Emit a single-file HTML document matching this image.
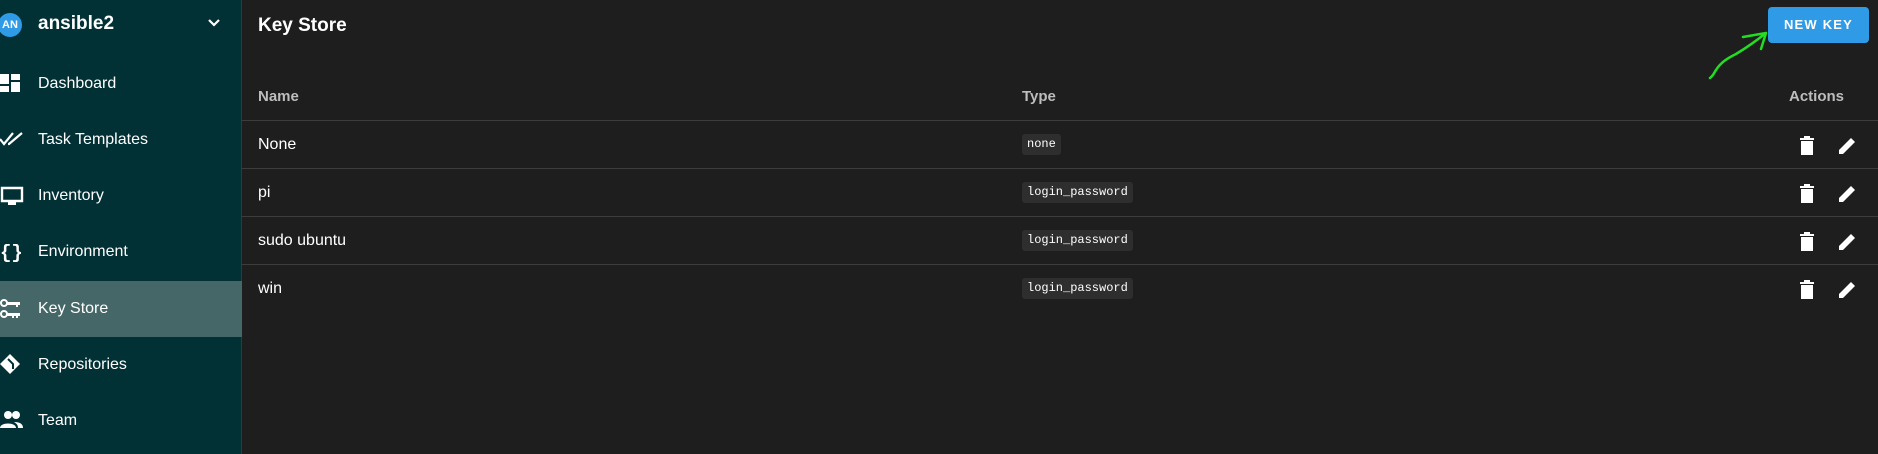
<!DOCTYPE html>
<html><head><meta charset="utf-8"><style>
*{margin:0;padding:0;box-sizing:border-box}
body{width:1878px;height:454px;background:#1e1e1e;font-family:"Liberation Sans",sans-serif;color:#fff;position:relative;overflow:hidden}
.side{position:absolute;left:0;top:0;width:242px;height:454px;background:#013035;border-right:1px solid #2a3b3d}
.av{position:absolute;left:-2px;top:13px;width:24px;height:24px;border-radius:50%;background:#2f9be6;font-size:11px;font-weight:bold;line-height:24px;text-align:center}
.proj{position:absolute;left:38px;top:13px;font-size:19px;font-weight:bold}
.chev{position:absolute;left:207px;top:18px}
.item{position:absolute;left:0;width:242px;height:56px}
.item span{position:absolute;left:38px;top:19px;font-size:16px}
.item svg{position:absolute;left:0;top:17px}
.sel{background:#466767}
.title{position:absolute;left:258px;top:15px;font-size:19px;font-weight:bold}
.btn{position:absolute;left:1768px;top:7px;width:101px;height:36px;background:#2f9be6;border-radius:4px;font-size:13px;font-weight:bold;letter-spacing:1.2px;text-align:center;line-height:36px}
.th{position:absolute;top:88px;font-size:15px;font-weight:bold;color:#bdbdbd}
.line{position:absolute;left:242px;width:1636px;height:1px;background:#3c3c3c}
.nm{position:absolute;left:258px;font-size:16px}
.chip{position:absolute;left:1022px;height:21px;background:#2e2e2e;border-radius:3px;font-family:"Liberation Mono",monospace;font-size:12px;line-height:21px;padding:0 5px}
.ic{position:absolute}
</style></head><body>
<div class="side">
<div class="av">AN</div><div class="proj">ansible2</div>
<svg class="chev" width="14" height="10" viewBox="0 0 14 10"><path d="M2 2l5 5 5-5" stroke="#fff" stroke-width="2.2" fill="none"/></svg>
<div class="item" style="top:56px"><svg width="22" height="20" viewBox="0 0 22 20"><path d="M0 1h9v10H0zM0 13h9v6H0zM11 1h9v6h-9zM11 9h9v10h-9z" fill="#fff"/></svg><span>Dashboard</span></div>
<div class="item" style="top:112px"><svg width="24" height="20" viewBox="0 0 24 20"><path d="M0 10l4 5 9-11M8 15l1 0 13-11" stroke="#fff" stroke-width="2.2" fill="none"/></svg><span>Task Templates</span></div>
<div class="item" style="top:168px"><svg width="24" height="22" viewBox="0 0 24 22"><path d="M2 3h20v13H2z" stroke="#fff" stroke-width="2.4" fill="none"/><path d="M8 17h8v3H8z" fill="#fff"/></svg><span>Inventory</span></div>
<div class="item" style="top:224px"><svg width="24" height="22" viewBox="0 0 24 22"><text x="0" y="17" font-size="19" font-weight="bold" fill="#fff" font-family="Liberation Mono">{}</text></svg><span>Environment</span></div>
<div class="item sel" style="top:281px"><svg width="24" height="22" viewBox="0 0 24 22"><circle cx="4" cy="5" r="3" stroke="#fff" stroke-width="2" fill="none"/><path d="M7 4h13v3h-2v2h-2V7H7z" fill="#fff"/><circle cx="4" cy="16" r="3" stroke="#fff" stroke-width="2" fill="none"/><path d="M7 15h13v3h-2v2h-2v-2h-2v2h-2v-2H7z" fill="#fff"/></svg><span>Key Store</span></div>
<div class="item" style="top:337px"><svg width="24" height="22" viewBox="0 0 24 22"><path d="M10 0l10 10-10 10L0 10z" fill="#fff"/><path d="M8 5l5 5v5M13 10" stroke="#013035" stroke-width="2" fill="none"/></svg><span>Repositories</span></div>
<div class="item" style="top:393px"><svg width="24" height="22" viewBox="0 0 24 22"><circle cx="8" cy="5" r="4" fill="#fff"/><circle cx="16" cy="5" r="4" fill="#fff"/><path d="M0 18c0-6 16-6 16 0zM14 12c6 0 9 2 9 6h-5c0-3-1-4-4-6z" fill="#fff"/></svg><span>Team</span></div>
</div>
<div class="title">Key Store</div>
<div class="btn">NEW KEY</div>
<svg class="ic" style="left:1700px;top:25px" width="80" height="60" viewBox="0 0 80 60"><path d="M10 53c3-2 4-5 6-8 5-8 12-12 20-16 10-6 20-13 30-21M43 12L66 8L61 24" stroke="#22dd22" stroke-width="2.5" fill="none" stroke-linecap="round" stroke-linejoin="round"/></svg>
<div class="th" style="left:258px">Name</div>
<div class="th" style="left:1022px">Type</div>
<div class="th" style="left:1789px">Actions</div>
<div class="line" style="top:120px"></div>
<div class="line" style="top:168px"></div>
<div class="line" style="top:216px"></div>
<div class="line" style="top:264px"></div>
<div class="nm" style="top:136px">None</div><div class="chip" style="top:134px">none</div>
<div class="nm" style="top:184px">pi</div><div class="chip" style="top:182px">login_password</div>
<div class="nm" style="top:232px">sudo ubuntu</div><div class="chip" style="top:230px">login_password</div>
<div class="nm" style="top:280px">win</div><div class="chip" style="top:278px">login_password</div>
<svg class="ic" style="left:1797px;top:135px" width="70" height="170" viewBox="0 0 70 170">
<g id="r"><path d="M3 3h14v2H3zM7 1h6v2H7zM4 6h12v14H4z" fill="#fff"/><path d="M42 15l12-12 4 4-12 12h-4z" fill="#fff"/></g>
<use href="#r" y="48"/><use href="#r" y="96"/><use href="#r" y="144"/>
</svg>
</body></html>
